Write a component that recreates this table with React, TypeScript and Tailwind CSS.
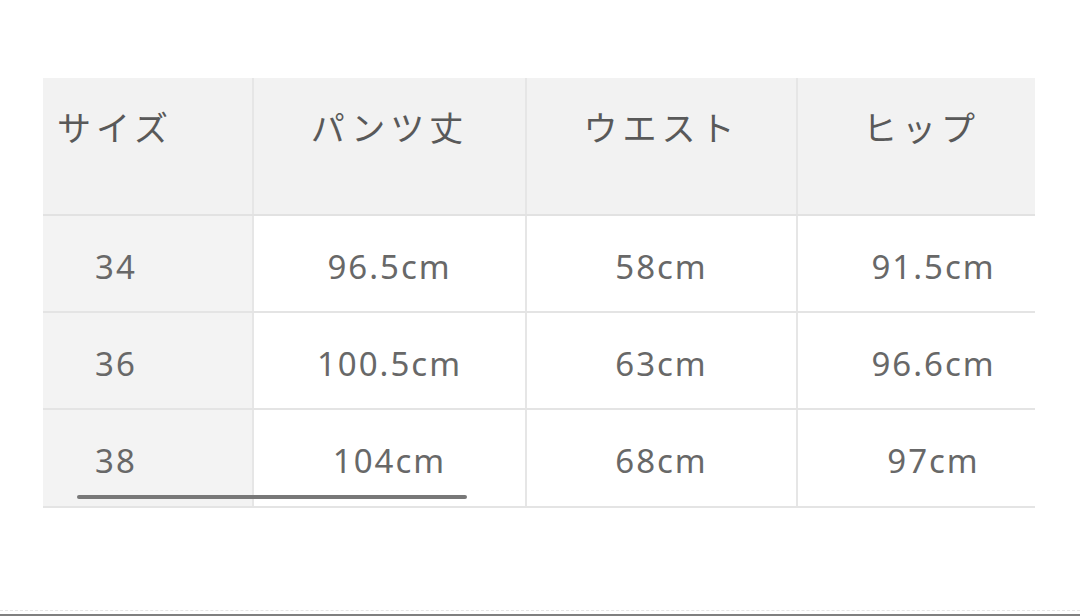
import React from 'react';

const headers = ['サイズ', 'パンツ丈', 'ウエスト', 'ヒップ'];

const rows = [
    ['34', '96.5cm', '58cm', '91.5cm'],
    ['36', '100.5cm', '63cm', '96.6cm'],
    ['38', '104cm', '68cm', '97cm'],
];

const jpFont = { fontFamily: '"Noto Sans CJK JP", "Noto Sans", sans-serif' };
const numFont = { fontFamily: '"Noto Sans", "Open Sans", sans-serif' };

const App: React.FC = () => {
    return (
        <div className="w-[1080px] h-[616px] bg-white flex flex-col overflow-hidden">
            <div className="flex-1 pt-[78px] pl-[43px]">
                <div className="relative w-[992px]">
                    {/* Header */}
                    <div className="grid grid-cols-[211px_273px_271px_237px] h-[138px] bg-[#f2f2f2] border-b-2 border-[#e2e2e2]">
                        {headers.map((h, i) => (
                            <div
                                key={h}
                                style={jpFont}
                                className={`pt-[28px] text-[34px] leading-[42px] tracking-[5px] text-[#595959] font-normal ${
                                    i === 0 ? 'pl-[14px] text-left' : 'text-center'
                                } ${i < 3 ? 'border-r-2 border-[#e6e6e6]' : ''} ${i === 3 ? 'pl-[10px]' : ''}`}
                            >
                                {h}
                            </div>
                        ))}
                    </div>

                    {/* Body */}
                    {rows.map((row, r) => (
                        <div
                            key={row[0]}
                            className={`grid grid-cols-[211px_273px_271px_237px] ${
                                r === 2 ? 'h-[98px]' : 'h-[97px]'
                            } border-b-2 border-[#e4e4e4]`}
                        >
                            {row.map((cell, i) => (
                                <div
                                    key={i}
                                    style={numFont}
                                    className={`flex items-center pt-[6px] text-[33px] tracking-[2px] text-[#686868] ${
                                        i === 0 ? 'bg-[#f3f3f3] pl-[52px]' : 'bg-white justify-center'
                                    } ${i < 3 ? 'border-r-2 border-[#e6e6e6]' : ''} ${i === 3 ? 'pl-[34px]' : ''}`}
                                >
                                    {cell}
                                </div>
                            ))}
                        </div>
                    ))}

                    {/* hand-drawn underline over the last row */}
                    <div className="absolute left-[34px] top-[417px] w-[390px] h-[4px] rounded-full bg-[#787878]" />
                </div>
            </div>
            <div className="h-[4px] border-t border-dashed border-[#e6e6e6]" />
            <div className="h-[2px] bg-[#808080]" />
        </div>
    );
};

export default App;
